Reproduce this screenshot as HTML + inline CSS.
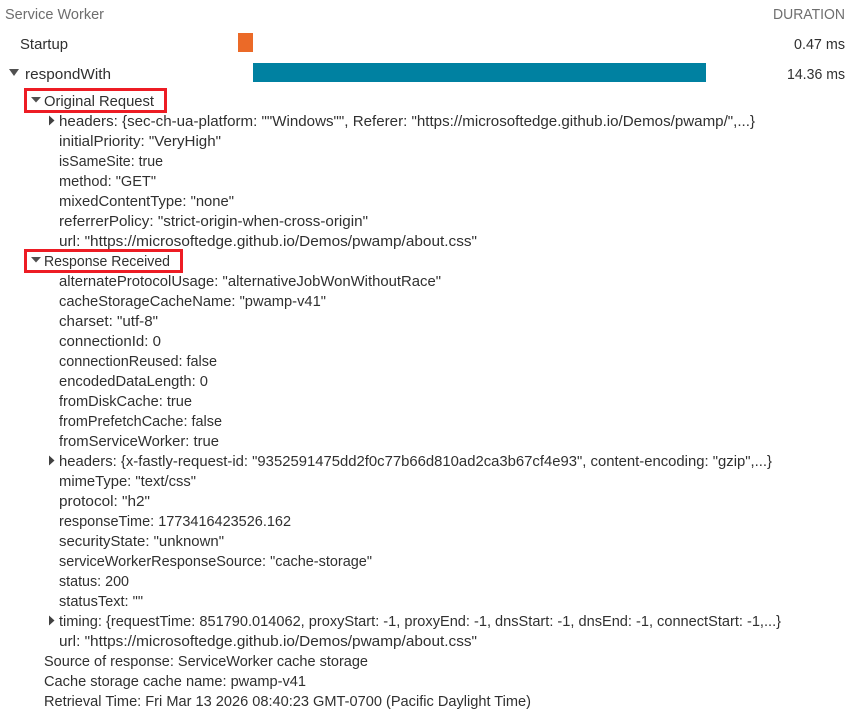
<!DOCTYPE html>
<html><head><meta charset="utf-8"><style>
html,body{margin:0;padding:0;background:#fff;width:852px;height:717px;overflow:hidden}
svg{display:block;position:absolute;left:0;top:0}
text{font-family:"Liberation Sans",sans-serif;font-size:14.5px;fill:#303030}
.g{fill:#6e6e6e}
</style></head><body>
<svg width="852" height="717" viewBox="0 0 852 717" xmlns="http://www.w3.org/2000/svg">
<rect x="238" y="33" width="15" height="19" fill="#eb6a28"/>
<rect x="253" y="63" width="453" height="19" fill="#0081a1"/>
<rect x="25.5" y="89.5" width="140" height="22" fill="none" stroke="#ed1c24" stroke-width="3"/>
<rect x="25.5" y="250.5" width="156" height="21" fill="none" stroke="#ed1c24" stroke-width="3"/>
<path d="M9 69H19L14 76Z" fill="#505050"/>
<path d="M31 97H41L36 102.500Z" fill="#505050"/>
<path d="M31 257H41L36 262.500Z" fill="#505050"/>
<path d="M49 115.500L54.500 120.500L49 125.500Z" fill="#404040"/>
<path d="M49 455.500L54.500 460.500L49 465.500Z" fill="#404040"/>
<path d="M49 615.500L54.500 620.500L49 625.500Z" fill="#404040"/>
<text class="g" x="5" y="19" textLength="99" lengthAdjust="spacingAndGlyphs">Service Worker</text>
<text class="g" x="773" y="19" textLength="72" lengthAdjust="spacingAndGlyphs">DURATION</text>
<text x="20" y="49" textLength="48" lengthAdjust="spacingAndGlyphs">Startup</text>
<text x="794" y="49" textLength="51" lengthAdjust="spacingAndGlyphs">0.47 ms</text>
<text x="25" y="79" textLength="86" lengthAdjust="spacingAndGlyphs">respondWith</text>
<text x="787" y="79" textLength="58" lengthAdjust="spacingAndGlyphs">14.36 ms</text>
<text x="44" y="106" textLength="110" lengthAdjust="spacingAndGlyphs">Original Request</text>
<text x="59" y="126" textLength="696" lengthAdjust="spacingAndGlyphs">headers: {sec-ch-ua-platform: ""Windows"", Referer: "https://microsoftedge.github.io/Demos/pwamp/",...}</text>
<text x="59" y="146" textLength="162" lengthAdjust="spacingAndGlyphs">initialPriority: "VeryHigh"</text>
<text x="59" y="166" textLength="104" lengthAdjust="spacingAndGlyphs">isSameSite: true</text>
<text x="59" y="186" textLength="97" lengthAdjust="spacingAndGlyphs">method: "GET"</text>
<text x="59" y="206" textLength="175" lengthAdjust="spacingAndGlyphs">mixedContentType: "none"</text>
<text x="59" y="226" textLength="309" lengthAdjust="spacingAndGlyphs">referrerPolicy: "strict-origin-when-cross-origin"</text>
<text x="59" y="246" textLength="418" lengthAdjust="spacingAndGlyphs">url: "https://microsoftedge.github.io/Demos/pwamp/about.css"</text>
<text x="44" y="266" textLength="126" lengthAdjust="spacingAndGlyphs">Response Received</text>
<text x="59" y="286" textLength="382" lengthAdjust="spacingAndGlyphs">alternateProtocolUsage: "alternativeJobWonWithoutRace"</text>
<text x="59" y="306" textLength="267" lengthAdjust="spacingAndGlyphs">cacheStorageCacheName: "pwamp-v41"</text>
<text x="59" y="326" textLength="99" lengthAdjust="spacingAndGlyphs">charset: "utf-8"</text>
<text x="59" y="346" textLength="102" lengthAdjust="spacingAndGlyphs">connectionId: 0</text>
<text x="59" y="366" textLength="158" lengthAdjust="spacingAndGlyphs">connectionReused: false</text>
<text x="59" y="386" textLength="149" lengthAdjust="spacingAndGlyphs">encodedDataLength: 0</text>
<text x="59" y="406" textLength="133" lengthAdjust="spacingAndGlyphs">fromDiskCache: true</text>
<text x="59" y="426" textLength="163" lengthAdjust="spacingAndGlyphs">fromPrefetchCache: false</text>
<text x="59" y="446" textLength="160" lengthAdjust="spacingAndGlyphs">fromServiceWorker: true</text>
<text x="59" y="466" textLength="713" lengthAdjust="spacingAndGlyphs">headers: {x-fastly-request-id: "9352591475dd2f0c77b66d810ad2ca3b67cf4e93", content-encoding: "gzip",...}</text>
<text x="59" y="486" textLength="137" lengthAdjust="spacingAndGlyphs">mimeType: "text/css"</text>
<text x="59" y="506" textLength="91" lengthAdjust="spacingAndGlyphs">protocol: "h2"</text>
<text x="59" y="526" textLength="232" lengthAdjust="spacingAndGlyphs">responseTime: 1773416423526.162</text>
<text x="59" y="546" textLength="165" lengthAdjust="spacingAndGlyphs">securityState: "unknown"</text>
<text x="59" y="566" textLength="313" lengthAdjust="spacingAndGlyphs">serviceWorkerResponseSource: "cache-storage"</text>
<text x="59" y="586" textLength="70" lengthAdjust="spacingAndGlyphs">status: 200</text>
<text x="59" y="606" textLength="84" lengthAdjust="spacingAndGlyphs">statusText: ""</text>
<text x="59" y="626" textLength="722" lengthAdjust="spacingAndGlyphs">timing: {requestTime: 851790.014062, proxyStart: -1, proxyEnd: -1, dnsStart: -1, dnsEnd: -1, connectStart: -1,...}</text>
<text x="59" y="646" textLength="418" lengthAdjust="spacingAndGlyphs">url: "https://microsoftedge.github.io/Demos/pwamp/about.css"</text>
<text x="44" y="666" textLength="324" lengthAdjust="spacingAndGlyphs">Source of response: ServiceWorker cache storage</text>
<text x="44" y="686" textLength="262" lengthAdjust="spacingAndGlyphs">Cache storage cache name: pwamp-v41</text>
<text x="44" y="706" textLength="487" lengthAdjust="spacingAndGlyphs">Retrieval Time: Fri Mar 13 2026 08:40:23 GMT-0700 (Pacific Daylight Time)</text>
</svg>
</body></html>
